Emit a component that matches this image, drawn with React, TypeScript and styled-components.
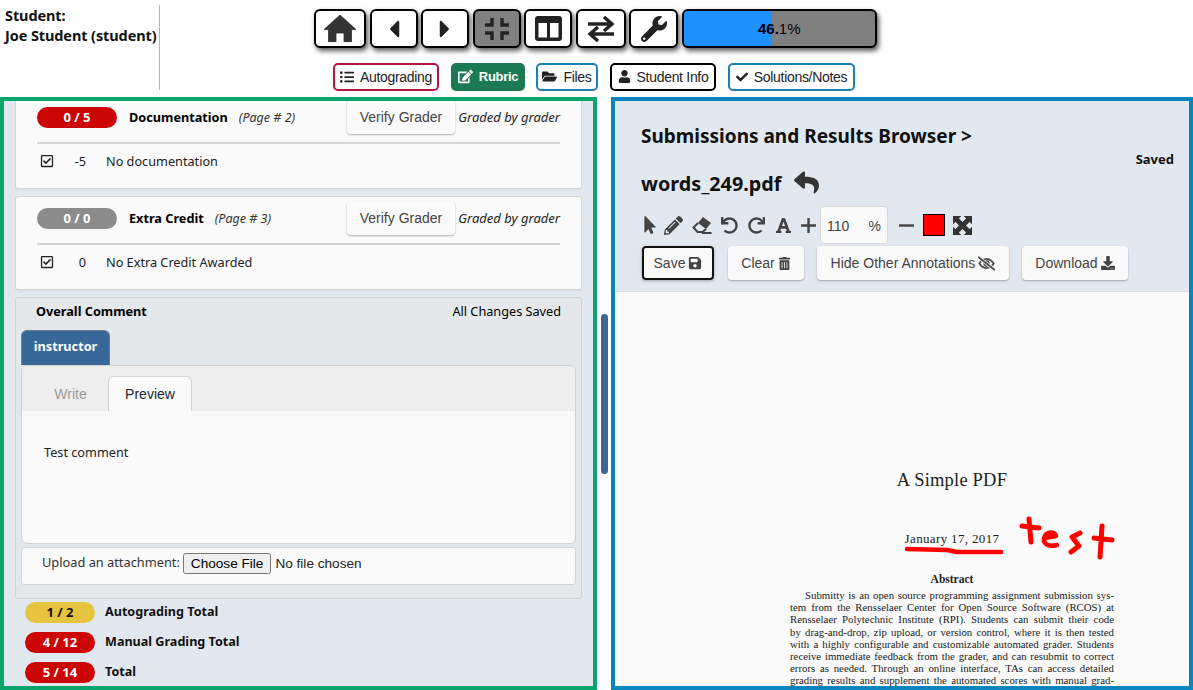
import React from "react";
import styled, { createGlobalStyle } from "styled-components";
import {
  FaCaretLeft, FaCaretRight, FaWrench, FaListUl, FaEdit, FaFolderOpen,
  FaUser, FaCheck, FaRegCheckSquare, FaReply, FaMousePointer, FaPencilAlt, FaUndo, FaRedo, FaFont,
  FaSave, FaTrashAlt, FaRegEyeSlash, FaDownload,
} from "react-icons/fa";

const Global = createGlobalStyle`
  html, body { margin: 0; padding: 0; height: 690px; overflow: hidden; background: #fff; }
  * { box-sizing: border-box; }
  #root { height: 690px; font-family: "Noto Sans", "Open Sans", sans-serif; color: #000; }
`;

const Page = styled.div`
  width: 1193px; height: 690px; display: flex; flex-direction: column;
`;
const Header = styled.header`
  height: 97px; display: grid; grid-template-columns: 160px 1fr 160px;
`;
const Student = styled.div`
  margin-top: 5px; height: 85px; border-right: 1px solid #b5b5b5; padding: 0 0 0 5px;
  font-size: 14.5px; font-weight: 700; line-height: 20px; letter-spacing: -0.1px; white-space: nowrap; color: #111;
`;
const Centre = styled.div`
  display: flex; flex-direction: column; align-items: center; padding-top: 9px;
`;
const NavRow = styled.div`display: flex; gap: 3.5px; height: 39px; margin-left: -2px;`;
const NavButton = styled.div<{ $w: number; $active?: boolean }>`
  width: ${(p) => p.$w}px; height: 39px; display: flex; align-items: center; justify-content: center;
  border: 2.5px solid #000; border-radius: 6px; background: ${(p) => (p.$active ? "#808080" : "#fff")};
  box-shadow: 2px 3px 5px rgba(0,0,0,.65); color: #222;
`;
const Progress = styled.div`
  width: 195px; height: 39px; position: relative; display: flex; align-items: center; justify-content: center;
  border: 2.5px solid #000; border-radius: 6px; overflow: hidden; background: #808080;
  box-shadow: 2px 3px 5px rgba(0,0,0,.65); font-family: "Liberation Sans", sans-serif; font-size: 15px;
`;
const ProgressFill = styled.div`position: absolute; left: 0; top: 0; bottom: 0; background: #1e90ff;`;
const ProgressText = styled.span`position: relative; color: #000; b { font-weight: 700; }`;
const TabRow = styled.div`display: flex; gap: 12px; margin-top: 15px; height: 28px; margin-left: -5px;`;
const TabButton = styled.div<{ $c: string; $w: number; $fill?: boolean; $tight?: boolean }>`
  width: ${(p) => p.$w}px; height: 28px; display: flex; align-items: center; justify-content: center; gap: 6px;
  padding-bottom: 1px; margin-left: ${(p) => (p.$tight ? "-1px" : "0")};
  border: 2px solid ${(p) => p.$c}; border-radius: 5px; background: ${(p) => (p.$fill ? p.$c : "#fff")};
  color: ${(p) => (p.$fill ? "#fff" : "#222")}; font-family: "Liberation Sans", sans-serif;
  font-size: ${(p) => (p.$fill ? 13 : 14)}px;
  font-weight: ${(p) => (p.$fill ? 700 : 400)}; letter-spacing: -0.3px; white-space: nowrap;
`;
const Main = styled.div`flex: 1; display: flex; min-height: 0;`;
const LeftPanel = styled.section`
  width: 597px; height: 593px; border: 4px solid #0aa56c; background: #e1e8f0; overflow: hidden;
  padding: 0 11px;
`;
const RightPanel = styled.section`
  width: 582px; height: 593px; border: 4px solid #0a84bc; background: #e1e8f0; overflow: hidden;
  display: flex; flex-direction: column;
`;
const Gutter = styled.div`width: 14px; display: flex; align-items: center; justify-content: center;`;
const Handle = styled.div`width: 7px; height: 160px; border-radius: 4px; background: #3a6795;`;

const Card = styled.div<{ $clip?: boolean }>`
  margin-top: ${(p) => (p.$clip ? "-6px" : "7px")}; width: 567px; height: 94px; background: #fafafa;
  border: 1px solid #d4d4d4; border-radius: 3px; padding: 0 21px; box-shadow: 0 1px 1px rgba(0,0,0,.05);
`;
const CardHead = styled.div`
  height: 48px; display: flex; align-items: center; border-bottom: 2px solid #d5d5d5; padding-bottom: 4px;
`;
const Pill = styled.div<{ $bg: string; $w: number; $fg?: string }>`
  width: ${(p) => p.$w}px; height: 21px; border-radius: 11px; background: ${(p) => p.$bg};
  color: ${(p) => p.$fg || "#fff"}; font-size: 13px; font-weight: 700; line-height: 21px; text-align: center; flex: none;
`;
const ItemTitle = styled.span`margin-left: 12px; font-size: 12.7px; font-weight: 700; white-space: nowrap;`;
const PageRef = styled.span`margin-left: 11px; font-size: 12.5px; font-style: italic; color: #333; white-space: nowrap;`;
const Spacer = styled.div`flex: 1;`;
const Btn = styled.div<{ $w: number; $focus?: boolean }>`
  width: ${(p) => p.$w}px; height: 34px; display: flex; align-items: center; justify-content: center; gap: 3px;
  border-radius: 4px; background: #fafafa; color: #444; flex: none;
  font-family: "Liberation Sans", sans-serif; font-size: 14px; white-space: nowrap;
  box-shadow: ${(p) => (p.$focus ? "0 0 0 2px #111 inset, 0 1px 3px rgba(0,0,0,.3)" : "0 1px 2px rgba(0,0,0,.3)")};
`;
const Graded = styled.span`margin-left: 3px; font-size: 13px; font-style: italic; color: #222; white-space: nowrap; width: 102px; text-align: right;`;
const MarkRow = styled.div`
  height: 34px; display: flex; align-items: center; font-size: 12.7px; color: #222; padding-left: 3px;
`;
const Points = styled.span`width: 32px; text-align: right; margin-right: 20px;`;

const Comment = styled.div`
  margin-top: 7px; width: 567px; height: 302px; background: #e4e8ea; border: 1px solid #d2d2d2; border-radius: 3px;
  padding: 0 5px;
`;
const CommentHead = styled.div`
  height: 26px; display: flex; justify-content: space-between; align-items: center; padding: 0 15px;
  font-size: 12.7px;
`;
const Strong = styled.b`font-weight: 700;`;
const OwnerTab = styled.div`
  margin-top: 6px; width: 89px; height: 35px; background: #38679a; border: 1px solid #6e7f92; border-bottom: 0;
  border-radius: 6px 6px 0 0; color: #fff; font-size: 12.7px; font-weight: 700; text-align: center; line-height: 30px;
`;
const Editor = styled.div`
  width: 555px; height: 179px; background: #fafafa; border: 1px solid #d0d0d0; border-radius: 6px; overflow: hidden;
`;
const EditorTabs = styled.div`
  height: 45px; background: #eee; display: flex; align-items: flex-end; padding-left: 22px;
  font-family: "Liberation Sans", sans-serif; font-size: 14px;
`;
const EditorTab = styled.div<{ $active?: boolean }>`
  width: ${(p) => (p.$active ? 84 : 64)}px; height: 35px; display: flex; align-items: center; justify-content: center;
  border: ${(p) => (p.$active ? "1px solid #d0d0d0" : "0")}; border-bottom: 0; border-radius: 6px 6px 0 0;
  padding-right: ${(p) => (p.$active ? 0 : 11)}px;
  background: ${(p) => (p.$active ? "#fafafa" : "transparent")}; color: ${(p) => (p.$active ? "#1c2733" : "#999")};
`;
const EditorBody = styled.div`padding: 31px 22px; font-size: 12.7px; color: #222; line-height: 20px;`;
const Upload = styled.div`
  margin-top: 3px; width: 555px; height: 38px; background: #fafafa; border: 1px solid #d4d4d4; border-radius: 3px;
  display: flex; align-items: flex-start; padding: 5px 0 0 20px; font-size: 12.8px; color: #333; white-space: nowrap;
  line-height: 18px;
  input { margin-left: 3px; font-family: "Liberation Sans", sans-serif; font-size: 13.6px; color: #222; }
`;
const Totals = styled.div`margin-top: 3px; padding-left: 10px; display: flex; flex-direction: column; gap: 9px;`;
const TotalRow = styled.div`display: flex; align-items: center; height: 21px;`;
const TotalLabel = styled.span`margin: -3px 0 0 10px; font-size: 12.6px; font-weight: 700; color: #111; white-space: nowrap;`;

const RightHead = styled.div`height: 190px; padding: 0 15px 0 26px; flex: none;`;
const Title = styled.div`padding-top: 23px; font-size: 19px; font-weight: 700; line-height: 24px; color: #111;`;
const Saved = styled.div`text-align: right; font-size: 13px; font-weight: 700; line-height: 16px; margin-top: 3px; color: #111;`;
const FileRow = styled.div`
  margin-top: 4px; display: flex; align-items: center; gap: 13px; font-size: 19.8px; font-weight: 700; line-height: 26px; color: #111;
  svg { color: #333; margin-top: -4px; }
`;
const Tools = styled.div`display: flex; align-items: center; height: 38px; margin-top: 9px; gap: 9px; color: #444;`;
const PointerIcon = styled(FaMousePointer)`margin-right: -4px;`;
const RedoIcon = styled(FaRedo)`margin-left: 1px;`;
const FontIcon = styled(FaFont)`margin-left: 1px;`;
const Zoom = styled.div`
  width: 68px; height: 38px; background: #fafafa; border: 1px solid #d8d8d8; border-radius: 4px; margin: 0 2px 0 -5px;
  display: flex; align-items: center; justify-content: space-between; padding: 2px 6px 0 6px;
  font-family: "Liberation Sans", sans-serif; font-size: 14px; color: #444;
`;
const Swatch = styled.div`width: 22px; height: 22px; background: #f00; border: 1px solid #000; margin-right: -1px;`;
const Actions = styled.div`display: flex; margin-top: 2px; gap: 13px; margin-left: 1px;`;
const SaveWrap = styled.div`margin-right: 1px;`;
const Pdf = styled.div`
  flex: 1; min-height: 0; background: #fafafa; border-top: 1px solid #d8dde2; position: relative; overflow: hidden;
  display: flex; flex-direction: column; align-items: center; font-family: "Liberation Serif", serif; color: #222;
  padding: 177px 0 0 100px;
`;
const PdfTitle = styled.div`font-size: 18.5px; line-height: 22px; letter-spacing: .2px;`;
const PdfDate = styled.div`margin-top: 40px; font-size: 13px; line-height: 16px; letter-spacing: .35px;`;
const PdfAbstract = styled.div`margin-top: 25px; font-size: 11.5px; font-weight: 700; line-height: 14px;`;
const PdfBody = styled.div`width: 324px; margin-top: 3px; font-size: 10.8px; line-height: 12.2px;`;
const PdfLine = styled.div<{ $indent?: boolean }>`
  text-align: justify; text-align-last: justify; white-space: nowrap; padding-left: ${(p) => (p.$indent ? 15 : 0)}px;
`;
const Scribble = styled.svg`position: absolute; left: 0; top: 0; width: 574px; height: 395px; pointer-events: none;`;

const HomeIcon = () => (
  <svg width="32" height="27" viewBox="0 0 32 27" fill="#333">
    <path d="M16 0 L32 14.5 L27.5 14.5 L27.5 27 L20 27 L20 18 L12 18 L12 27 L4.500 27 L4.500 14.500 L0 14.500 Z" strokeLinejoin="round" stroke="#333" strokeWidth="0.8" />
  </svg>
);
const CompressIcon = () => (
  <svg width="26" height="24" viewBox="0 0 26 24" fill="none" stroke="#222" strokeWidth="3.4">
    <path d="M8 1v7H1M18 1v7h7M8 23v-7H1M18 23v-7h7" />
  </svg>
);
const LayoutIcon = () => (
  <svg width="27" height="25" viewBox="0 0 27 25">
    <path fillRule="evenodd" fill="#222" d="M3 0h21a3 3 0 0 1 3 3v19a3 3 0 0 1-3 3H3a3 3 0 0 1-3-3V3a3 3 0 0 1 3-3zM3.500 7v14.500h8.500V7zM15 7v14.500h8.500V7z" />
  </svg>
);
const SwapIcon = () => (
  <svg width="28" height="26" viewBox="0 0 28 26" fill="none" stroke="#222" strokeWidth="3.4">
    <path d="M1 8h24M17 1l8 7-8 7" strokeLinejoin="miter" />
    <path d="M27 18H3M11 11l-8 7 8 7" strokeLinejoin="miter" />
  </svg>
);
const EraserIcon = () => (
  <svg width="20" height="17" viewBox="0 0 20 17">
    <path fill="#444" d="M11 0 L19 6 L14 12 L6 6 Z" />
    <path fill="none" stroke="#444" strokeWidth="2" d="M6 6 L1.500 10.500 L5.500 15 L10.500 15 L14 12" />
    <path stroke="#444" strokeWidth="2" d="M10 16 H19.500" />
  </svg>
);
const PlusIcon = () => (
  <svg width="15" height="15" viewBox="0 0 15 15" stroke="#444" strokeWidth="2.4"><path d="M7.500 0v15M0 7.500h15" /></svg>
);
const MinusIcon = () => (
  <svg width="15" height="15" viewBox="0 0 15 15" stroke="#444" strokeWidth="2.4"><path d="M0 7.500h15" /></svg>
);
const ExpandIcon = () => (
  <svg width="19" height="19" viewBox="0 0 19 19" fill="#333" stroke="#333">
    <path d="M0 0h8L0 8zM19 0v8L11 0zM0 19v-8l8 8zM19 19h-8l8-8z" strokeWidth="0.5" />
    <path d="M3 3l13 13M16 3L3 16" strokeWidth="5" />
    <path d="M7 7h5v5H7z" strokeWidth="0" />
  </svg>
);

const pdfLines = [
  "Submitty is an open source programming assignment submission sys-",
  "tem from the Rensselaer Center for Open Source Software (RCOS) at",
  "Rensselaer Polytechnic Institute (RPI). Students can submit their code",
  "by drag-and-drop, zip upload, or version control, where it is then tested",
  "with a highly configurable and customizable automated grader. Students",
  "receive immediate feedback from the grader, and can resubmit to correct",
  "errors as needed.  Through an online interface, TAs can access detailed",
  "grading results and supplement the automated scores with manual grad-",
];

const GradeCard = ({ clip, pill, pillBg, title, page, pts, text }: { clip?: boolean; pill: string; pillBg: string; title: string; page: string; pts: string; text: string }) => (
  <Card $clip={clip}>
    <CardHead>
      <Pill $bg={pillBg} $w={80}>{pill}</Pill>
      <ItemTitle>{title}</ItemTitle>
      <PageRef>{page}</PageRef>
      <Spacer />
      <Btn $w={108}>Verify Grader</Btn>
      <Graded>Graded by grader</Graded>
    </CardHead>
    <MarkRow>
      <FaRegCheckSquare size={14} />
      <Points>{pts}</Points>
      <span>{text}</span>
    </MarkRow>
  </Card>
);

export default function App() {
  return (
    <Page>
      <Global />
      <Header>
        <Student>Student:<br />Joe Student (student)</Student>
        <Centre>
          <NavRow>
            <NavButton $w={52}><HomeIcon /></NavButton>
            <NavButton $w={48}><FaCaretLeft size={28} /></NavButton>
            <NavButton $w={48}><FaCaretRight size={28} /></NavButton>
            <NavButton $w={48} $active><CompressIcon /></NavButton>
            <NavButton $w={48}><LayoutIcon /></NavButton>
            <NavButton $w={50}><SwapIcon /></NavButton>
            <NavButton $w={49}><FaWrench size={26} /></NavButton>
            <Progress>
              <ProgressFill style={{ width: "46.1%" }} />
              <ProgressText><b>46.</b>1%</ProgressText>
            </Progress>
          </NavRow>
          <TabRow>
            <TabButton $c="#b5163f" $w={106}><FaListUl size={14} />Autograding</TabButton>
            <TabButton $c="#1c7a52" $w={74} $fill><FaEdit size={15} />Rubric</TabButton>
            <TabButton $c="#1b80b4" $w={62} $tight><FaFolderOpen size={15} />Files</TabButton>
            <TabButton $c="#000" $w={106}><FaUser size={13} />Student Info</TabButton>
            <TabButton $c="#1b80b4" $w={127}><FaCheck size={12} />Solutions/Notes</TabButton>
          </TabRow>
        </Centre>
        <div />
      </Header>
      <Main>
        <LeftPanel>
          <GradeCard clip pill="0 / 5" pillBg="#cc0505" title="Documentation" page="(Page # 2)" pts="-5" text="No documentation" />
          <GradeCard pill="0 / 0" pillBg="#8c8c8c" title="Extra Credit" page="(Page # 3)" pts="0" text="No Extra Credit Awarded" />
          <Comment>
            <CommentHead><Strong>Overall Comment</Strong><span>All Changes Saved</span></CommentHead>
            <OwnerTab>instructor</OwnerTab>
            <Editor>
              <EditorTabs>
                <EditorTab>Write</EditorTab>
                <EditorTab $active>Preview</EditorTab>
              </EditorTabs>
              <EditorBody>Test comment</EditorBody>
            </Editor>
            <Upload>Upload an attachment:<input type="file" /></Upload>
          </Comment>
          <Totals>
            <TotalRow><Pill $bg="#e6c440" $fg="#111" $w={70}>1 / 2</Pill><TotalLabel>Autograding Total</TotalLabel></TotalRow>
            <TotalRow><Pill $bg="#cc0505" $w={70}>4 / 12</Pill><TotalLabel>Manual Grading Total</TotalLabel></TotalRow>
            <TotalRow><Pill $bg="#cc0505" $w={70}>5 / 14</Pill><TotalLabel>Total</TotalLabel></TotalRow>
          </Totals>
        </LeftPanel>
        <Gutter><Handle /></Gutter>
        <RightPanel>
          <RightHead>
            <Title>Submissions and Results Browser &gt;</Title>
            <Saved>Saved</Saved>
            <FileRow>words_249.pdf<FaReply size={25} /></FileRow>
            <Tools>
              <PointerIcon size={18} />
              <FaPencilAlt size={19} />
              <EraserIcon />
              <FaUndo size={17} />
              <RedoIcon size={17} />
              <FontIcon size={17} />
              <PlusIcon />
              <Zoom><span>110</span><span>%</span></Zoom>
              <MinusIcon />
              <Swatch />
              <ExpandIcon />
            </Tools>
            <Actions>
              <SaveWrap><Btn $w={72} $focus>Save <FaSave size={14} /></Btn></SaveWrap>
              <Btn $w={76}>Clear <FaTrashAlt size={13} /></Btn>
              <Btn $w={192}>Hide Other Annotations <FaRegEyeSlash size={17} stroke="currentColor" strokeWidth={24} /></Btn>
              <Btn $w={106}>Download <FaDownload size={14} /></Btn>
            </Actions>
          </RightHead>
          <Pdf>
            <PdfTitle>A Simple PDF</PdfTitle>
            <PdfDate>January 17, 2017</PdfDate>
            <PdfAbstract>Abstract</PdfAbstract>
            <PdfBody>
              {pdfLines.map((l, i) => <PdfLine key={i} $indent={i === 0}>{l}</PdfLine>)}
            </PdfBody>
            <Scribble viewBox="615 291 574 395" fill="none" stroke="#f00" strokeLinecap="round" strokeLinejoin="round">
              <path d="M907 548 L947 549 L957 551 L1001 551" strokeWidth="4.500" />
              <path d="M1029 518 L1031 541 M1022 525 L1039 527" strokeWidth="5" />
              <path d="M1045 537 L1056 535 C1055 530 1046 530 1044 537 C1043 544 1050 546 1057 544" strokeWidth="4.500" />
              <path d="M1080 532 L1072 536 L1079 545 L1071 551" strokeWidth="5" />
              <path d="M1102 525 L1100 556 M1094 537 L1112 539" strokeWidth="5" />
            </Scribble>
          </Pdf>
        </RightPanel>
      </Main>
    </Page>
  );
}
